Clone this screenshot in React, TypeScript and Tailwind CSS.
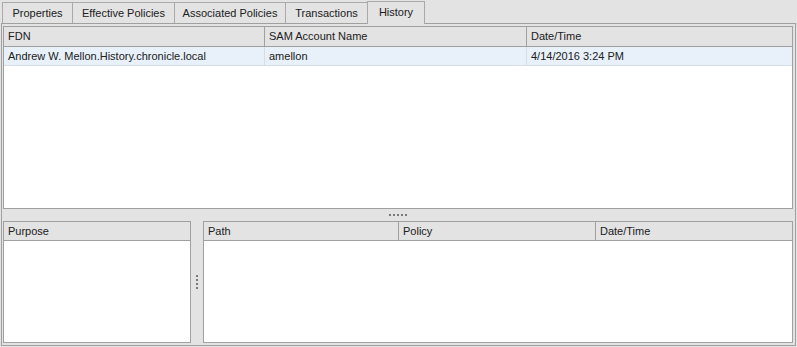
import React from 'react';

const tabs = [
  { label: 'Properties', w: 'w-[70px]' },
  { label: 'Effective Policies', w: 'w-[102px]' },
  { label: 'Associated Policies', w: 'w-[111px]' },
  { label: 'Transactions', w: 'w-[82px]' },
];

const Dots: React.FC<{ vertical?: boolean; count: number }> = ({ vertical, count }) => (
  <div className={vertical ? 'flex flex-col gap-[2px]' : 'flex gap-[2px]'}>
    {Array.from({ length: count }).map((_, i) => (
      <span key={i} className="block w-[2px] h-[2px] bg-[#7a7a7a]" />
    ))}
  </div>
);

const App: React.FC = () => {
  return (
    <div
      className="w-[797px] h-[347px] bg-[#e3e3e3] flex flex-col text-[11px] text-[#202020] overflow-hidden"
      style={{ fontFamily: '"Liberation Sans", Arial, sans-serif' }}
    >
      {/* Tab strip */}
      <div className="flex items-end h-[23px] pl-[2px]">
        {tabs.map((t) => (
          <div
            key={t.label}
            className={`${t.w} h-[21px] flex items-center justify-center border-l border-t border-[#a9a9a9] last:border-r`}
          >
            {t.label}
          </div>
        ))}
        <div className="w-[58px] h-[23px] -mb-px flex items-center justify-center border border-b-0 border-[#a9a9a9] bg-[#e3e3e3] pb-[2px] relative z-10">
          History
        </div>
      </div>

      {/* Content panel */}
      <div className="mx-[1px] mb-[1px] flex-1 border border-[#a0a0a0] pt-[2px] pb-[2px] pl-[1px] pr-[2px] flex flex-col">
        {/* Top grid */}
        <div className="h-[183px] border border-[#a0a0a0] bg-white flex flex-col">
          <div className="h-[20px] flex bg-[#e3e3e3] border-b border-[#a0a0a0]">
            <div className="w-[261px] border-r border-[#a0a0a0] pl-[4px] flex items-center">FDN</div>
            <div className="w-[262px] border-r border-[#a0a0a0] pl-[4px] flex items-center">SAM Account Name</div>
            <div className="flex-1 pl-[4px] flex items-center">Date/Time</div>
          </div>
          <div className="h-[19px] flex bg-[#e8f1fa] border-b border-[#d6dde4]">
            <div className="w-[261px] border-r border-[#d6dde4] pl-[4px] flex items-center">
              Andrew W. Mellon.History.chronicle.local
            </div>
            <div className="w-[262px] border-r border-[#d6dde4] pl-[4px] flex items-center">amellon</div>
            <div className="flex-1 pl-[4px] flex items-center">4/14/2016 3:24 PM</div>
          </div>
        </div>

        {/* Horizontal splitter */}
        <div className="h-[12px] flex items-center justify-center">
          <Dots count={5} />
        </div>

        {/* Bottom panels */}
        <div className="flex-1 flex">
          <div className="w-[188px] border border-[#a0a0a0] bg-white flex flex-col">
            <div className="h-[19px] bg-[#e3e3e3] border-b border-[#a0a0a0] pl-[4px] flex items-center">
              Purpose
            </div>
          </div>

          <div className="w-[12px] flex items-center justify-center">
            <Dots vertical count={4} />
          </div>

          <div className="flex-1 border border-[#a0a0a0] bg-white flex flex-col">
            <div className="h-[19px] flex bg-[#e3e3e3] border-b border-[#a0a0a0]">
              <div className="w-[195px] border-r border-[#a0a0a0] pl-[4px] flex items-center">Path</div>
              <div className="w-[197px] border-r border-[#a0a0a0] pl-[4px] flex items-center">Policy</div>
              <div className="flex-1 pl-[4px] flex items-center">Date/Time</div>
            </div>
          </div>
        </div>
      </div>
    </div>
  );
};

export default App;
